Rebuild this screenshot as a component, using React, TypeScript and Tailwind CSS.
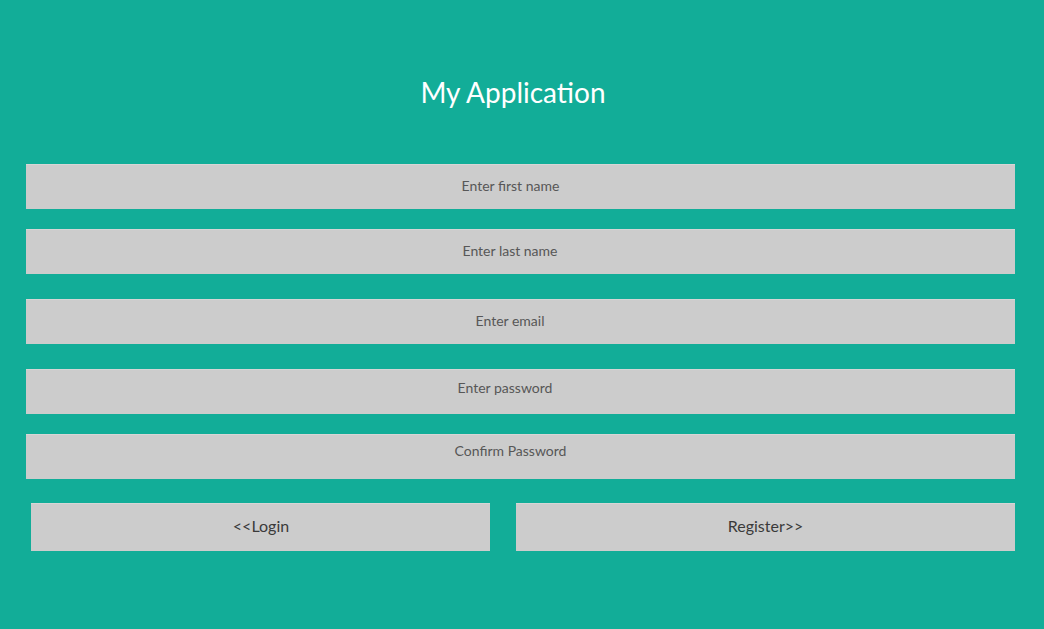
import React from "react";

const fields = [
  { ph: "Enter first name", cls: "mt-0 pr-[20px] pb-[3px]" },
  { ph: "Enter last name", cls: "mt-[20px] pr-[21px] pb-[3px]" },
  { ph: "Enter email", cls: "mt-[25px] pr-[21px] pb-[3px]" },
  { ph: "Enter password", cls: "mt-[25px] pr-[31px] pb-[9px]" },
  { ph: "Confirm Password", cls: "mt-[20px] pr-[20px] pb-[13px]" },
];

export default function App() {
  return (
    <div
      className="w-[1044px] h-[629px] bg-[#12ad98] flex flex-col"
      style={{ fontFamily: "Lato, 'Open Sans', sans-serif" }}
    >
      <h1 className="mt-[74px] h-[36px] leading-[36px] text-center text-white text-[28px] font-normal pr-[18px]">
        My Application
      </h1>
      <div className="mt-[54px] flex flex-col pl-[26px] pr-[29px]">
        {fields.map((f) => (
          <input
            key={f.ph}
            type="text"
            placeholder={f.ph}
            className={`${f.cls} w-full h-[45px] bg-[#cccccc] border-t border-[#d6d6d6] text-center text-[14px] text-[#444] placeholder:text-[#575757] outline-none`}
          />
        ))}
      </div>
      <div className="mt-[24px] flex pl-[31px] pr-[29px] gap-[26px]">
        <button className="w-[459px] h-[48px] bg-[#cccccc] border-t border-[#d6d6d6] text-[16px] text-[#3a3a3a] pl-[1px] pb-[3px]">
          &lt;&lt;Login
        </button>
        <button className="flex-1 h-[48px] bg-[#cccccc] border-t border-[#d6d6d6] text-[16px] text-[#3a3a3a] pb-[3px]">
          Register&gt;&gt;
        </button>
      </div>
    </div>
  );
}
